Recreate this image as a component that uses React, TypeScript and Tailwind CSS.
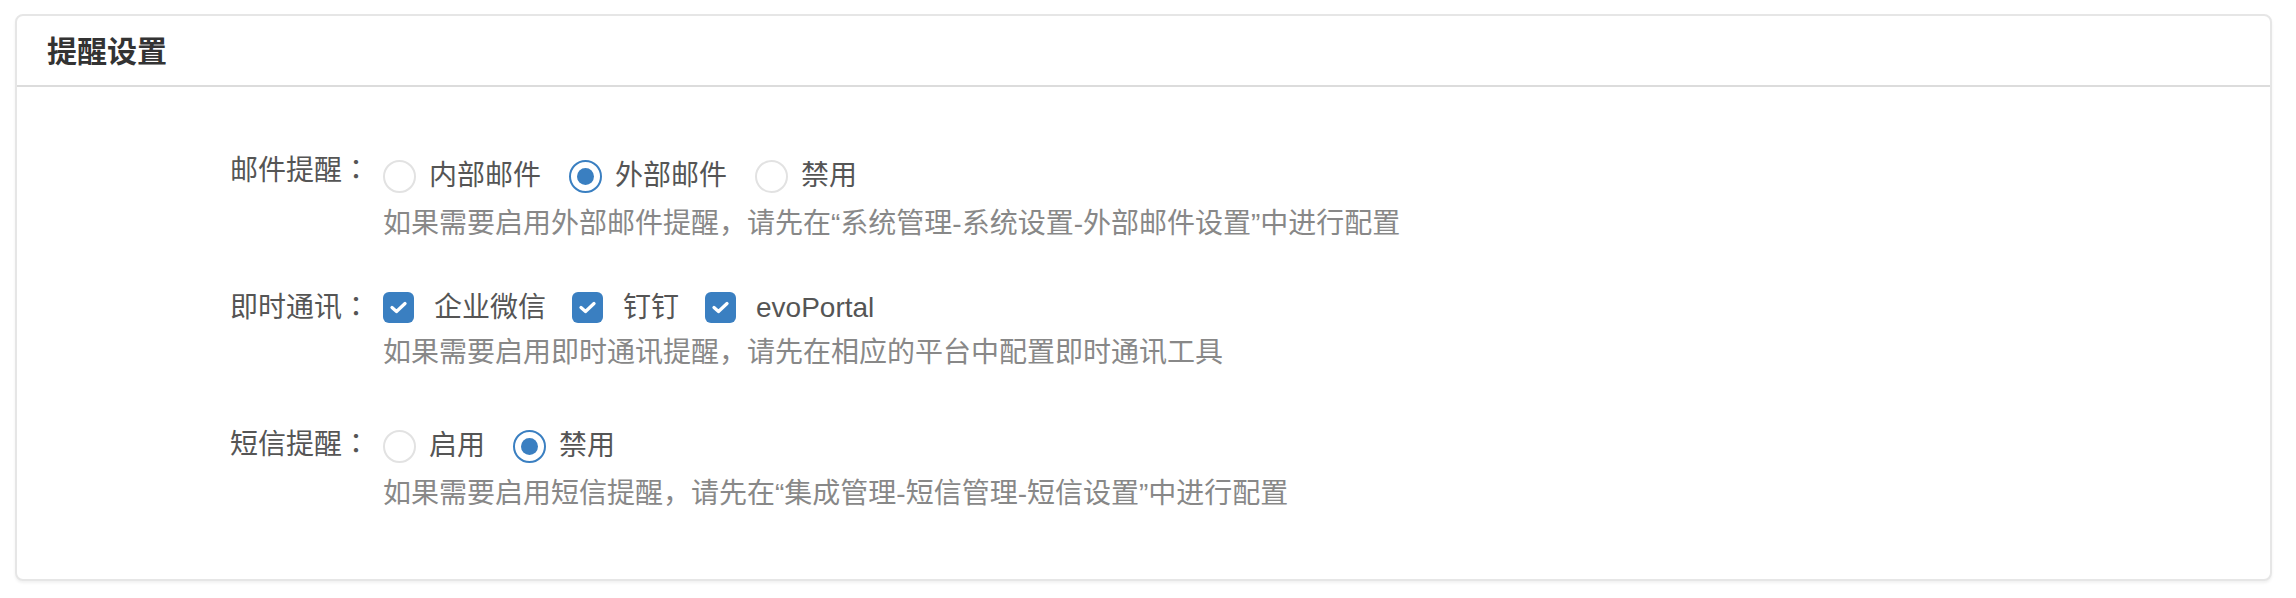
import React from "react";

const FONT = "font-['Liberation_Sans','Noto_Sans_CJK_SC',sans-serif]";

function Radio({ label, checked }: { label: string; checked?: boolean }) {
  return (
    <label className="mr-[28px] flex items-center">
      {checked ? (
        <span className="flex h-[33px] w-[33px] items-center justify-center rounded-full border-2 border-[#3a7fc1] bg-white">
          <span className="h-[17px] w-[17px] rounded-full bg-[#3a7fc1]" />
        </span>
      ) : (
        <span className="h-[33px] w-[33px] rounded-full border-2 border-[#e2e2e2] bg-white" />
      )}
      <span className="ml-[13px] text-[28px] leading-[34px] text-[#555]">{label}</span>
    </label>
  );
}

function Checkbox({ label }: { label: string }) {
  return (
    <label className="mr-[26px] flex items-center">
      <span className="flex h-[31px] w-[31px] items-center justify-center rounded-[6px] bg-[#3a7fc1]">
        <svg width="17" height="13" viewBox="0 0 17 13" fill="none">
          <path d="M2 6.5 L6.5 10.5 L15 2.5" stroke="#fff" strokeWidth="3.2" strokeLinecap="round" strokeLinejoin="round" />
        </svg>
      </span>
      <span className="ml-[20px] text-[28px] leading-[31px] text-[#555]">{label}</span>
    </label>
  );
}

function Field({
  label,
  labelClass,
  hint,
  hintClass,
  className,
  children,
}: {
  label: string;
  labelClass: string;
  hint: string;
  hintClass: string;
  className: string;
  children: React.ReactNode;
}) {
  return (
    <div className={`flex items-start ${className}`}>
      <div className={`w-[353px] shrink-0 text-right text-[28px] text-[#555] ${labelClass}`}>
        {label}
        <span className="font-['Noto_Sans_CJK_JP',sans-serif]">：</span>
      </div>
      <div className="ml-[13px]">
        <div className="flex items-center">{children}</div>
        <div className={`text-[28px] leading-[28px] text-[#888] ${hintClass}`}>{hint}</div>
      </div>
    </div>
  );
}

export default function App() {
  return (
    <div className={`min-h-[598px] bg-white pb-[13px] pl-[15px] pr-[24px] pt-[14px] ${FONT}`}>
      <div className="rounded-[8px] border-2 border-[#e6e6e6] bg-white shadow-[0_2px_3px_rgba(0,0,0,0.06)]">
        <div className="h-[71px] border-b-2 border-[#dcdcdc] pl-[30px] text-[30px] font-bold leading-[71px] text-[#333]">
          提醒设置
        </div>
        <div className="pb-[71px] pt-[72px]">
          <Field
            label="邮件提醒"
            labelClass="leading-[18px]"
            hint="如果需要启用外部邮件提醒，请先在“系统管理-系统设置-外部邮件设置”中进行配置"
            hintClass="mt-[17px]"
            className=""
          >
            <Radio label="内部邮件" />
            <Radio label="外部邮件" checked />
            <Radio label="禁用" />
          </Field>
          <Field
            label="即时通讯"
            labelClass="leading-[27px]"
            hint="如果需要启用即时通讯提醒，请先在相应的平台中配置即时通讯工具"
            hintClass="mt-[16px]"
            className="mt-[54px]"
          >
            <Checkbox label="企业微信" />
            <Checkbox label="钉钉" />
            <Checkbox label="evoPortal" />
          </Field>
          <Field
            label="短信提醒"
            labelClass="leading-[26px]"
            hint="如果需要启用短信提醒，请先在“集成管理-短信管理-短信设置”中进行配置"
            hintClass="mt-[17px]"
            className="mt-[62px]"
          >
            <Radio label="启用" />
            <Radio label="禁用" checked />
          </Field>
        </div>
      </div>
    </div>
  );
}
